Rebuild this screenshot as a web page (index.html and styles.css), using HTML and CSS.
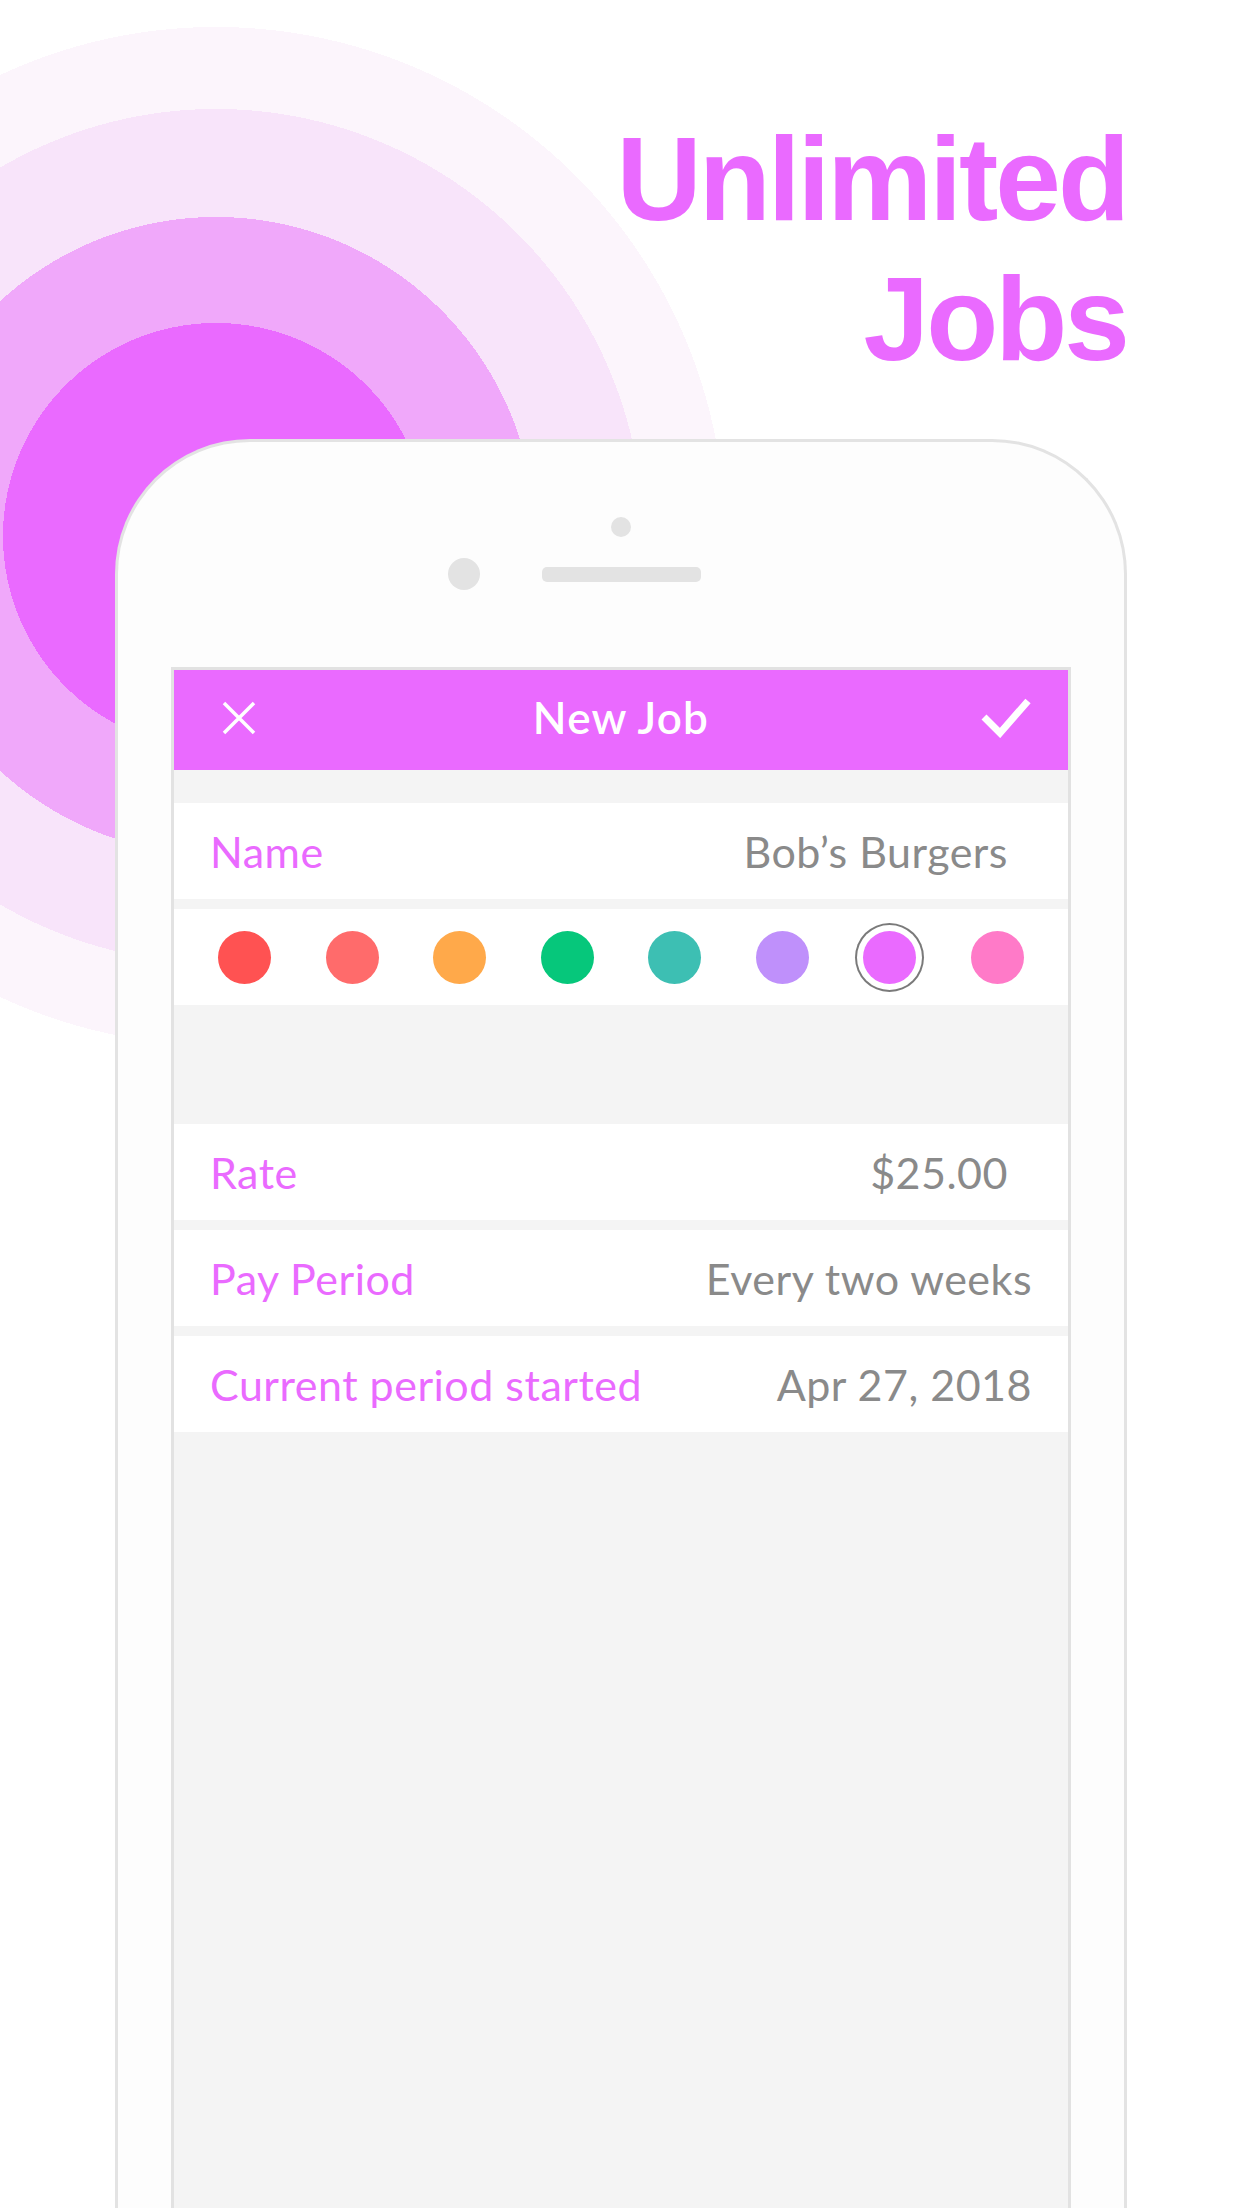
FILE: index.html
```html
<!DOCTYPE html>
<html lang="en">
<head>
  <meta charset="UTF-8" />
  <meta name="viewport" content="width=device-width, initial-scale=1.0" />
  <title>Unlimited Jobs</title>
  <link rel="stylesheet" href="styles.css">
</head>
<body>
  <div class="page">
    <h1 class="headline">Unlimited<br>Jobs</h1>

    <div class="phone">
      <div class="camera"></div>
      <div class="earpiece">
        <span class="sensor"></span>
        <span class="speaker"></span>
        <span class="spacer"></span>
      </div>

      <div class="screen">
        <div class="navbar">
          <svg class="nav-close" width="34" height="34" viewBox="0 0 34 34">
            <path d="M2 2 L32 32 M32 2 L2 32" stroke="#fff" stroke-width="3.5" fill="none" />
          </svg>
          <span class="nav-title">New Job</span>
          <svg class="nav-done" width="50" height="40" viewBox="0 0 50 40">
            <polyline points="3,19 19,35 47,3" stroke="#fff" stroke-width="7" fill="none" stroke-linejoin="miter" />
          </svg>
        </div>

        <div class="group first">
          <div class="row">
            <span class="label">Name</span>
            <span class="value input">Bob’s Burgers</span>
          </div>
          <div class="row colors">
            <span class="dot red"></span>
            <span class="dot salmon"></span>
            <span class="dot orange"></span>
            <span class="dot green"></span>
            <span class="dot teal"></span>
            <span class="dot lavender"></span>
            <span class="dot violet selected"></span>
            <span class="dot pink"></span>
          </div>
        </div>

        <div class="group">
          <div class="row">
            <span class="label">Rate</span>
            <span class="value input">$25.00</span>
          </div>
          <div class="row">
            <span class="label">Pay Period</span>
            <span class="value">Every two weeks</span>
          </div>
          <div class="row">
            <span class="label">Current period started</span>
            <span class="value">Apr 27, 2018</span>
          </div>
        </div>
      </div>
    </div>
  </div>
</body>
</html>
```

FILE: styles.css
```css
body {
  margin: 0;
  height: 2208px;
  overflow: hidden;
  background: radial-gradient(circle at 216px 536px,
    #ea6aff 213px,
    #f0a8fa 213px 319px,
    #f8e4fa 319px 427px,
    #fcf5fc 427px 509px,
    #ffffff 509px);
}
.page {
  padding: 0 115px;
}
.headline {
  margin: 109px 0 0;
  font-family: "Liberation Sans", Arial, sans-serif;
  font-weight: bold;
  font-size: 118px;
  line-height: 140px;
  letter-spacing: -3px;
  text-align: right;
  color: #ea6aff;
}
.phone {
  margin-top: 50px;
  height: 1800px;
  box-sizing: border-box;
  border: 3px solid #e3e3e3;
  border-bottom: none;
  border-radius: 135px 135px 0 0;
  background: #fdfdfd;
  display: flex;
  flex-direction: column;
}
.camera {
  width: 20px;
  height: 20px;
  margin: 75px auto 0;
  border-radius: 50%;
  background: #e3e3e3;
}
.earpiece {
  margin-top: 21px;
  display: flex;
  justify-content: center;
  align-items: center;
  gap: 62px;
}
.sensor {
  width: 32px;
  height: 32px;
  border-radius: 50%;
  background: #e3e3e3;
}
.speaker {
  width: 159px;
  height: 15px;
  border-radius: 5px;
  background: #e3e3e3;
}
.spacer {
  width: 32px;
}
.screen {
  flex: 1;
  margin: 77px 53px 0;
  border: 3px solid #e2e2e2;
  border-bottom: none;
  background: #f4f4f4;
  font-family: "Lato", "Open Sans", sans-serif;
}
.navbar {
  height: 100px;
  background: #ea6aff;
  display: grid;
  grid-template-columns: 1fr auto 1fr;
  align-items: center;
  padding: 0 37px;
}
.nav-close {
  justify-self: start;
  margin: -4px 0 0 11px;
}
.nav-done {
  justify-self: end;
  margin-top: -4px;
}
.nav-title {
  color: #fff;
  font-size: 44px;
  font-weight: 600;
  letter-spacing: 1.2px;
  margin-top: -6px;
}
.group {
  display: flex;
  flex-direction: column;
  gap: 10px;
  margin-top: 119px;
}
.group.first {
  margin-top: 33px;
}
.row {
  height: 96px;
  background: #fff;
  display: flex;
  align-items: center;
  justify-content: space-between;
  padding: 0 36px;
  font-size: 43px;
  letter-spacing: 0.5px;
}
.label {
  color: #ea6aff;
}
.value {
  color: #8a8a8a;
}
.value.input {
  padding-right: 24px;
}
.colors {
  padding: 0 44px;
}
.dot {
  width: 53px;
  height: 53px;
  border-radius: 50%;
}
.dot.selected {
  box-shadow: 0 0 0 6px #fff, 0 0 0 8px #7a7a7a;
}
.red { background: #ff5252; }
.salmon { background: #ff6b6b; }
.orange { background: #ffa94a; }
.green { background: #06c77b; }
.teal { background: #3dbfb3; }
.lavender { background: #bf90fb; }
.violet { background: #ea6aff; }
.pink { background: #ff7ac8; }
```
